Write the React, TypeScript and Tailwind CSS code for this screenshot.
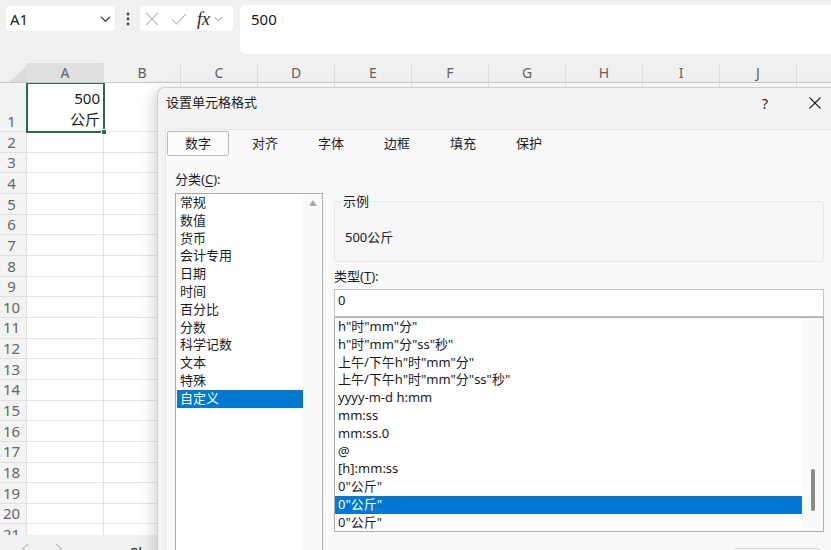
import clsx from "clsx";

const cols = ["A", "B", "C", "D", "E", "F", "G", "H", "I", "J", "K"];
const rowNums = Array.from({ length: 20 }, (_, i) => i + 2);

const categories = [
  "常规",
  "数值",
  "货币",
  "会计专用",
  "日期",
  "时间",
  "百分比",
  "分数",
  "科学记数",
  "文本",
  "特殊",
  "自定义",
];

const formats = [
  'h"时"mm"分"',
  'h"时"mm"分"ss"秒"',
  '上午/下午h"时"mm"分"',
  '上午/下午h"时"mm"分"ss"秒"',
  "yyyy-m-d h:mm",
  "mm:ss",
  "mm:ss.0",
  "@",
  "[h]:mm:ss",
  '0"公斤"',
  '0"公斤"',
  '0"公斤"',
];

const tabs = ["数字", "对齐", "字体", "边框", "填充", "保护"];

function Chevron({ className }: { className?: string }) {
  return (
    <svg viewBox="0 0 12 8" className={className} fill="none" stroke="currentColor" strokeWidth="1.3">
      <polyline points="1,1.5 6,6.5 11,1.5" />
    </svg>
  );
}

function FormulaBar() {
  return (
    <div className="h-[63px] shrink-0 bg-[#f0f0f0] flex items-start pt-[6px] pl-[6px]">
      <div className="w-[109px] h-[25px] bg-white rounded-[4px] flex items-center justify-between pl-[4px] pr-[4px] text-[15px] leading-[20px]">
        <span>A1</span>
        <Chevron className="w-[11px] h-[8px] text-[#444]" />
      </div>
      <div className="w-[25px] h-[25px] flex items-center justify-center">
        <svg viewBox="0 0 4 14" className="w-[4px] h-[14px] text-[#444]" fill="currentColor">
          <circle cx="2" cy="2" r="1.4" />
          <circle cx="2" cy="7" r="1.4" />
          <circle cx="2" cy="12" r="1.4" />
        </svg>
      </div>
      <div className="w-[93px] h-[25px] bg-white rounded-[4px] flex items-center pl-[5px]">
        <svg viewBox="0 0 14 14" className="w-[14px] h-[14px] text-[#bdbdbd]" fill="none" stroke="currentColor" strokeWidth="1.1">
          <line x1="1" y1="1" x2="13" y2="13" />
          <line x1="13" y1="1" x2="1" y2="13" />
        </svg>
        <svg viewBox="0 0 16 12" className="ml-[12px] w-[16px] h-[12px] text-[#bdbdbd]" fill="none" stroke="currentColor" strokeWidth="1.1">
          <polyline points="1,6 5.5,11 15,1" />
        </svg>
        <span className="ml-[10px] font-['Liberation_Serif',serif] italic text-[18px] leading-[20px] text-[#222]">fx</span>
        <Chevron className="ml-[4px] w-[9px] h-[6px] text-[#888]" />
      </div>
      <div className="ml-[7px] -mt-[1px] h-[49px] flex-1 bg-white rounded-l-[5px] pl-[11px] pt-[4px] text-[15px] leading-[20px]">
        500
      </div>
    </div>
  );
}

function ColumnHeaders() {
  return (
    <div className="h-[20px] shrink-0 flex bg-[#f0f0f0] border-b border-[#c8c8c8]">
      <div className="w-[27px] shrink-0 flex items-end justify-end">
        <svg viewBox="0 0 18 16" className="w-[18px] h-[16px] text-[#dadada]" fill="currentColor">
          <polygon points="18,0 18,16 0,16" />
        </svg>
      </div>
      {cols.map(c => (
        <div
          key={c}
          className={clsx(
            "w-[77px] shrink-0 flex items-center justify-center text-[14px] text-[#616161] border-r border-[#dcdcdc]",
            c === "A" && "bg-[#dfdfdf] text-[#444]"
          )}
        >
          {c}
        </div>
      ))}
    </div>
  );
}

function Grid() {
  return (
    <div className="flex-1 overflow-hidden">
      {/* row 1 holds the two-line value */}
      <div className="h-[49px] flex">
        <div className="w-[27px] shrink-0 bg-[#f3f3f3] border-b border-r border-[#e0e0e0] flex items-end justify-center pr-[3px] text-[15px] leading-[20px] text-[#666]">
          1
        </div>
        <div className="relative w-[77px] shrink-0 border-r border-b border-[#e4e4e4] pt-[5px] pr-[3px] text-right text-[15px] leading-[21px]">
          <div>500</div>
          <div>公斤</div>
          <div className="absolute -left-[1px] -top-[1px] w-[79px] h-[51px] border-2 border-[#2f6b49]" />
          <div className="absolute -right-[4px] -bottom-[4px] w-[6px] h-[6px] bg-[#2f6b49] border border-white" />
        </div>
        {cols.slice(1).map(c => (
          <div key={c} className="w-[77px] shrink-0 border-r border-b border-[#e4e4e4]" />
        ))}
      </div>
      {rowNums.map(n => (
        <div key={n} className="h-[20.67px] flex">
          <div className="w-[27px] shrink-0 bg-[#f3f3f3] border-b border-r border-[#e0e0e0] flex items-center justify-center pr-[3px] text-[15px] text-[#666]">
            {n}
          </div>
          {cols.map(c => (
            <div key={c} className="w-[77px] shrink-0 border-r border-b border-[#e4e4e4]" />
          ))}
        </div>
      ))}
    </div>
  );
}

function SheetTabs() {
  return (
    <div className="h-[15px] shrink-0 bg-[#f0f0f0] flex items-start overflow-hidden">
      <svg viewBox="0 0 8 12" className="ml-[22px] mt-[8px] w-[7px] h-[11px] text-[#b5b5b5]" fill="none" stroke="currentColor" strokeWidth="1.2">
        <polyline points="7,1 1,6 7,11" />
      </svg>
      <svg viewBox="0 0 8 12" className="ml-[26px] mt-[8px] w-[7px] h-[11px] text-[#b5b5b5]" fill="none" stroke="currentColor" strokeWidth="1.2">
        <polyline points="1,1 7,6 1,11" />
      </svg>
      <span className="ml-[68px] mt-[7px] text-[15px] leading-[20px]">Sheet1</span>
    </div>
  );
}

function FormatDialog() {
  return (
    <div className="absolute left-[157px] top-[87px] w-[690px] h-[480px] bg-[#f3f3f3] rounded-tl-[8px] border-l border-t border-[#cfcfcf] shadow-[-4px_3px_14px_rgba(0,0,0,0.16)] flex flex-col text-[13px] text-[#1b1b1b]">
      <div className="h-[30px] shrink-0 flex items-center pl-[8px] pr-[12px]">
        <span>设置单元格格式</span>
        <span className="ml-auto w-[20px] text-center text-[14px]">?</span>
        <div className="ml-[20px] w-[40px] flex justify-center">
          <svg viewBox="0 0 12 12" className="w-[12px] h-[12px] text-[#222]" fill="none" stroke="currentColor" strokeWidth="1.1">
            <line x1="0.5" y1="0.5" x2="11.5" y2="11.5" />
            <line x1="11.5" y1="0.5" x2="0.5" y2="11.5" />
          </svg>
        </div>
      </div>

      <div className="mt-[11px] ml-[7px] flex-1 bg-[#f9f9f9] border-l border-t border-[#e6e6e6] flex flex-col">
        <div className="mt-[1px] h-[25px] shrink-0 flex">
          {tabs.map((t, i) => (
            <div key={t} className="w-[66px] shrink-0 flex">
              <div
                className={clsx(
                  "flex-1 flex items-center justify-center",
                  i === 0 ? "ml-[1px] mr-[3px] bg-[#fcfcfc] border border-[#b9b9b9] rounded-[2px]" : ""
                )}
              >
                {t}
              </div>
            </div>
          ))}
        </div>

        <div className="flex pl-[9px]">
          {/* 分类 */}
          <div className="w-[148px] shrink-0">
            <div className="mt-[15px] h-[17px] leading-[17px]">
              分类(<span className="underline underline-offset-[2px]">C</span>):
            </div>
            <div className="mt-[5px] h-[380px] bg-white border border-[#acacac] flex">
              <div className="flex-1 pl-[1px]">
                {categories.map(c => (
                  <div
                    key={c}
                    className={clsx(
                      "h-[17.8px] leading-[17.8px] pl-[3px]",
                      c === "自定义" && "bg-[#0078d4] text-white"
                    )}
                  >
                    {c}
                  </div>
                ))}
              </div>
              <div className="w-[19px] shrink-0 bg-[#fafafa] flex justify-center pt-[6px]">
                <svg viewBox="0 0 8 6" className="w-[8px] h-[6px] text-[#a8a8a8]" fill="currentColor">
                  <polygon points="4,0 8,6 0,6" />
                </svg>
              </div>
            </div>
          </div>

          {/* 示例 / 类型 */}
          <div className="ml-[11px] w-[490px] shrink-0">
            <fieldset className="mt-[37px] h-[69px] p-0 pl-[6px] border border-[#e6e6e6] rounded-[3px] bg-[#f6f6f6]">
              <legend className="px-[2px] leading-[16px]">示例</legend>
              <div className="mt-[19px] pl-[4px] leading-[18px]">500公斤</div>
            </fieldset>

            <div className="mt-[6px] h-[17px] leading-[17px]">
              类型(<span className="underline underline-offset-[2px]">T</span>):
            </div>
            <div className="mt-[4px] h-[28px] bg-white border border-[#c4c4c4] overflow-hidden pl-[3px]">
              <div className="mt-[1px] h-[18px] leading-[18px]">0</div>
            </div>
            <div className="h-[215px] bg-white border border-[#acacac] flex">
              <div className="flex-1">
                {formats.map((f, i) => (
                  <div
                    key={i}
                    className={clsx(
                      "h-[17.8px] leading-[17.8px] pl-[3px] whitespace-nowrap",
                      i === 10 && "bg-[#0078d4] text-white"
                    )}
                  >
                    {f}
                  </div>
                ))}
              </div>
              <div className="w-[21px] shrink-0 bg-[#fafafa] flex justify-center pt-[151px]">
                <div className="w-[4px] h-[42px] rounded-full bg-[#8a8a8a]" />
              </div>
            </div>
            <div className="mt-[16px] flex justify-end pr-[3px]">
              <div className="w-[88px] h-[26px] bg-[#fdfdfd] border border-[#d0d0d0] rounded-[4px]" />
            </div>
          </div>
        </div>
      </div>
    </div>
  );
}

export default function App() {
  return (
    <div className="relative w-[831px] h-[550px] overflow-hidden bg-white flex flex-col font-['Noto_Sans','Noto_Sans_CJK_SC',sans-serif] text-[#1b1b1b]">
      <FormulaBar />
      <ColumnHeaders />
      <Grid />
      <SheetTabs />
      <FormatDialog />
    </div>
  );
}
